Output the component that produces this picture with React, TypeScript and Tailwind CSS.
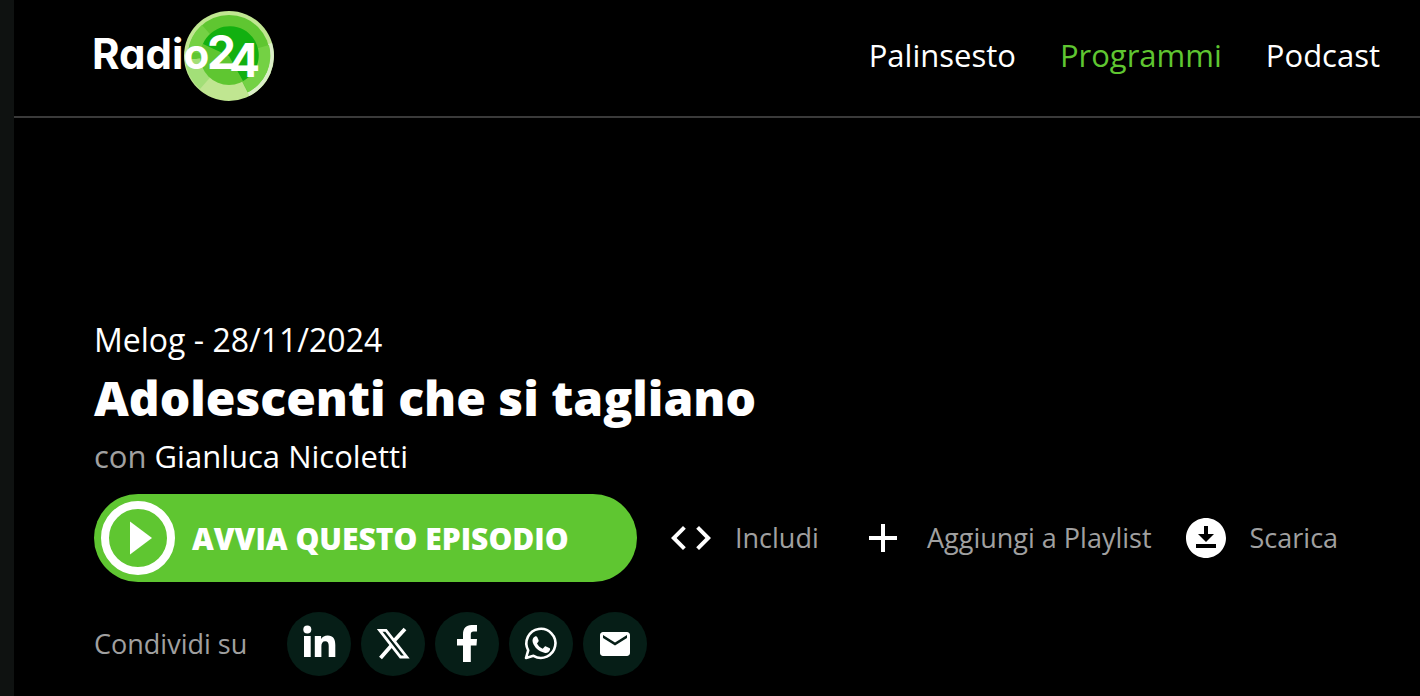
import React from 'react';
import { MdAdd, MdCode, MdDownloadForOffline, MdEmail } from 'react-icons/md';

const navItems = [
  { label: 'Palinsesto', active: false },
  { label: 'Programmi', active: true },
  { label: 'Podcast', active: false },
];

const actions = [
  { label: 'Includi', icon: MdCode },
  { label: 'Aggiungi a Playlist', icon: MdAdd },
  { label: 'Scarica', icon: MdDownloadForOffline },
];

const LinkedinIcon: React.FC = () => (
  <svg className="size-16" viewBox="0 0 64 64" fill="currentColor" aria-hidden="true">
    <circle cx="20.300" cy="17.500" r="4" />
    <path d="M17 24h6.700v21H17zM27.800 24h6.300v3c1.300-2.300 3.500-3.500 6.600-3.500 5.600 0 7.600 3.600 7.600 9.500v12h-6.600V34c0-3-.8-4.800-3.500-4.800s-3.800 2-3.800 5V45h-6.600z" />
  </svg>
);

const XIcon: React.FC = () => (
  <svg className="size-16" viewBox="0 0 64 64" fill="none" stroke="currentColor" aria-hidden="true">
    <path d="M18.700 18.300H25L45.800 45h-6.300z" strokeWidth="2.800" />
    <path d="M30 34L19.500 46M32.500 29.500L44 17" strokeWidth="3.800" />
  </svg>
);

const FacebookIcon: React.FC = () => (
  <svg className="size-16" viewBox="0 0 64 64" fill="currentColor" aria-hidden="true">
    <path d="M28 50V33.500h-6V27h6v-4.500c0-6 3-9.500 8.500-9.500H42v6.500h-3.300c-2.200 0-2.900 1-2.900 3V27H42l-.5 6.500h-5.700V50z" />
  </svg>
);

const WhatsappIcon: React.FC = () => (
  <svg className="size-16" viewBox="1 0 64 64" aria-hidden="true">
    <path
      d="M18 46L20.200 38.300A14.500 14.500 0 1 1 25.500 43.800Z"
      fill="none"
      stroke="currentColor"
      strokeWidth="2.600"
      strokeLinejoin="round"
    />
    <path
      d="M27 24.500c.8-.5 1.900-.2 2.300.7l1.300 3c.2.500.1 1-.3 1.500l-1.300 1.700c1.400 2.500 3.200 4.200 5.700 5.300l1.900-2c.4-.4.900-.5 1.400-.3l3.300 1.600c.8.400 1 1.200.6 2.100-.9 2.400-3.100 3.300-5.500 2.700-5.900-1.500-9.700-4.900-11.600-10.200-.8-2.400 0-4.900 2.200-6.100z"
      fill="currentColor"
    />
  </svg>
);

const shares = [
  { label: 'LinkedIn', icon: <LinkedinIcon /> },
  { label: 'X', icon: <XIcon /> },
  { label: 'Facebook', icon: <FacebookIcon /> },
  { label: 'WhatsApp', icon: <WhatsappIcon /> },
  { label: 'Email', icon: <MdEmail className="size-9" /> },
];

const Logo: React.FC = () => (
  <svg className="-ml-1 w-[188px] h-[92px]" viewBox="-4 0 188 92" role="img" aria-label="Radio24">
    {/* Disc */}
    <circle cx="135" cy="46" r="45" fill="#c0e691" />
    <path d="M135 46L178 33A45 45 0 0 1 155 86Z" fill="#dcefc9" />
    <circle cx="135" cy="46" r="41" fill="#5fc631" />
    <path d="M135 46L175 35A41 41 0 0 1 154 82Z" fill="#74d144" />
    <path d="M135 46L94 42A41 41 0 0 1 108 15Z" fill="#74d144" />
    <path d="M135 46L155 85A44 44 0 0 1 91 50Z" fill="#c0e691" />
    <path d="M135 46L91 50A44 44 0 0 0 106 79Z" fill="#a3df78" />
    <circle cx="135" cy="46" r="29" fill="#5fc631" />
    <path d="M135 46L109 34A29 29 0 1 1 149 71Z" fill="#12b010" />
    {/* Wordmark */}
    <text
      x="-2"
      y="59"
      fill="#fff"
      fontFamily="Inter, sans-serif"
      fontWeight="700"
      fontSize="42"
      style={{ fontFeatureSettings: '"cv11"' }}
    >
      Radio<tspan x="113" fontSize="46">2</tspan><tspan x="135" y="67" fontSize="46">4</tspan>
    </text>
  </svg>
);

const App: React.FC = () => {
  return (
    <div className="min-h-screen bg-black border-l-[14px] border-[#0f1211] font-['Open_Sans',sans-serif] text-white">
      {/* Header */}
      <header className="flex items-start justify-between border-b-2 border-[#3a3a3a] pl-20 pr-10 pt-[10px] pb-[14px]">
        <a href="#"><Logo /></a>
        <nav className="flex gap-11 pt-[25px] text-[31px] leading-10">
          {navItems.map((item) => (
            <a key={item.label} href="#" className={item.active ? 'text-[#5fc631]' : 'text-white'}>
              {item.label}
            </a>
          ))}
        </nav>
      </header>

      {/* Episode */}
      <main className="pl-20 pr-10 pt-[202px] pb-5">
        <p className="text-[32px] leading-10">Melog - 28/11/2024</p>
        <h1 className="text-[48px] leading-[76px] font-extrabold">Adolescenti che si tagliano</h1>
        <p className="text-[31px] leading-10 text-[#a0a0a0]">
          con <a href="#" className="text-white">Gianluca Nicoletti</a>
        </p>

        <div className="mt-[18px] flex items-center gap-[30px] whitespace-nowrap">
          <button className="flex w-[543px] h-22 shrink-0 items-center gap-4 rounded-full bg-[#5fc631] pl-[6px] text-[30px] font-extrabold">
            <svg className="size-19" viewBox="0 0 76 76" aria-hidden="true">
              <circle cx="38" cy="38" r="33" fill="none" stroke="#fff" strokeWidth="8" />
              <path d="M30 21.500v33L52 38z" fill="#fff" />
            </svg>
            AVVIA QUESTO EPISODIO
          </button>
          {actions.map((action) => (
            <button
              key={action.label}
              className="flex min-w-[162px] items-center gap-5 text-[27px] leading-10 text-[#a0a0a0]"
            >
              <action.icon className="size-12 text-white" />
              {action.label}
            </button>
          ))}
        </div>

        <div className="mt-[30px] flex items-center gap-10">
          <span className="text-[27px] leading-10 text-[#a0a0a0]">Condividi su</span>
          <div className="flex gap-[10px]">
            {shares.map((share) => (
              <a
                key={share.label}
                href="#"
                aria-label={share.label}
                className="flex size-16 items-center justify-center rounded-full bg-[#061e17]"
              >
                {share.icon}
              </a>
            ))}
          </div>
        </div>
      </main>
    </div>
  );
};

export default App;
